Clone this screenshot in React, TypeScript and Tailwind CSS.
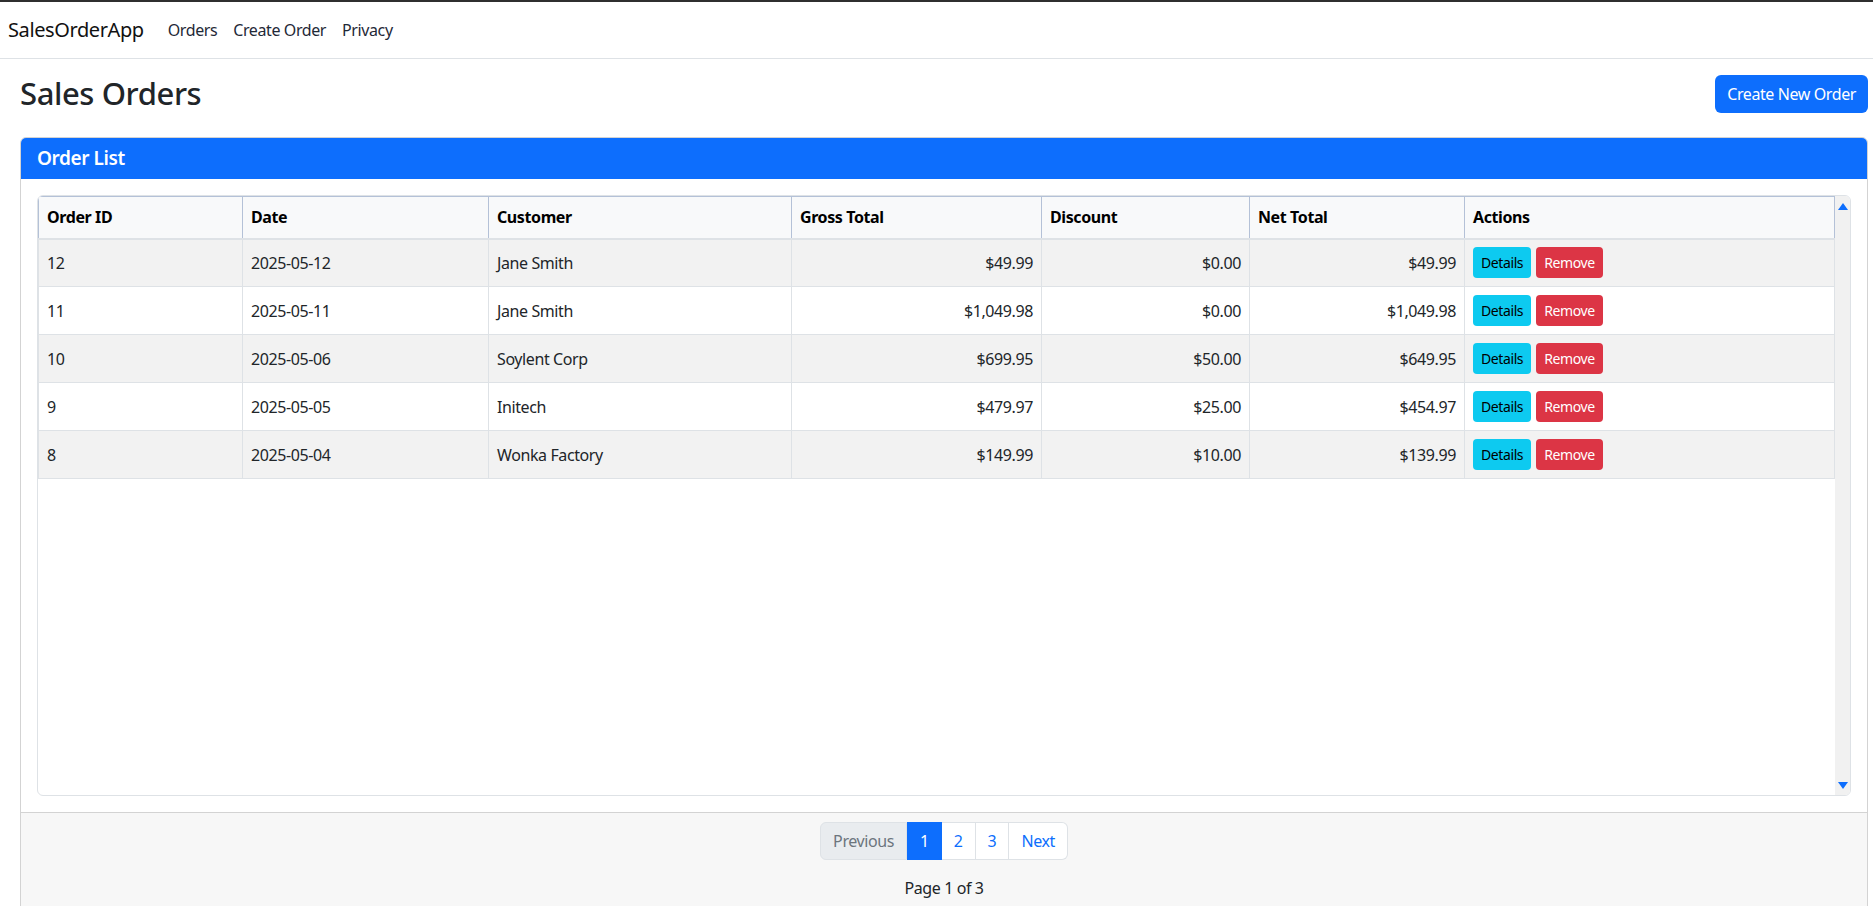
import React from "react";

type Order = {
  id: number;
  date: string;
  customer: string;
  gross: string;
  discount: string;
  net: string;
};

const orders: Order[] = [
  { id: 12, date: "2025-05-12", customer: "Jane Smith", gross: "$49.99", discount: "$0.00", net: "$49.99" },
  { id: 11, date: "2025-05-11", customer: "Jane Smith", gross: "$1,049.98", discount: "$0.00", net: "$1,049.98" },
  { id: 10, date: "2025-05-06", customer: "Soylent Corp", gross: "$699.95", discount: "$50.00", net: "$649.95" },
  { id: 9, date: "2025-05-05", customer: "Initech", gross: "$479.97", discount: "$25.00", net: "$454.97" },
  { id: 8, date: "2025-05-04", customer: "Wonka Factory", gross: "$149.99", discount: "$10.00", net: "$139.99" },
];

const th = "h-[42px] px-2 text-left font-bold text-black border-x border-t border-[#b4c1d7] border-b-2 border-b-[#dee2e6]";
const td = "h-[48px] px-2 border border-[#dee2e6]";

export default function App() {
  return (
    <div className="h-screen overflow-hidden bg-white font-['Noto_Sans',sans-serif] tracking-[-0.025em] text-[16px] text-[#212529]">
      <div className="h-[2px] bg-[#2f2f2f]" />
      {/* navbar */}
      <nav className="h-[57px] flex items-center px-2 border-b border-[#dee2e6]">
        <span className="text-[20px] text-[#111] mr-4">SalesOrderApp</span>
        <ul className="flex">
          <li className="px-2 text-[#1f2937]">Orders</li>
          <li className="px-2 text-[#1f2937]">Create Order</li>
          <li className="px-2 text-[#1f2937]">Privacy</li>
        </ul>
      </nav>

      <main className="pl-5 pr-[5px]">
        <div className="flex items-center justify-between mt-4 mb-6">
          <h2 className="text-[31px] font-medium leading-[1.2]">Sales Orders</h2>
          <button className="h-[38px] px-3 rounded-[6px] bg-[#0d6efd] text-white text-[16px]">Create New Order</button>
        </div>

        <div className="border border-[#d3d3d3] rounded-[6px] overflow-hidden">
          <div className="h-[41px] px-4 flex items-center bg-[#0d6efd] text-white">
            <h5 className="text-[19px] font-semibold">Order List</h5>
          </div>

          <div className="p-4">
            <div className="h-[601px] flex border border-[#dee2e6] rounded-[6px] overflow-hidden">
              <div className="flex-1">
                <table className="w-full border-collapse table-fixed">
                  <colgroup>
                    <col className="w-[204px]" />
                    <col className="w-[246px]" />
                    <col className="w-[303px]" />
                    <col className="w-[250px]" />
                    <col className="w-[208px]" />
                    <col className="w-[215px]" />
                    <col />
                  </colgroup>
                  <thead className="bg-[#f8f9fa]">
                    <tr>
                      <th className={th}>Order ID</th>
                      <th className={th}>Date</th>
                      <th className={th}>Customer</th>
                      <th className={th}>Gross Total</th>
                      <th className={th}>Discount</th>
                      <th className={th}>Net Total</th>
                      <th className={th}>Actions</th>
                    </tr>
                  </thead>
                  <tbody>
                    {orders.map((o, i) => (
                      <tr key={o.id} className={i % 2 === 0 ? "bg-[#f2f2f2]" : "bg-white"}>
                        <td className={td}>{o.id}</td>
                        <td className={td}>{o.date}</td>
                        <td className={td}>{o.customer}</td>
                        <td className={td + " text-right"}>{o.gross}</td>
                        <td className={td + " text-right"}>{o.discount}</td>
                        <td className={td + " text-right"}>{o.net}</td>
                        <td className={td}>
                          <div className="flex gap-[5px]">
                            <button className="h-[31px] px-2 rounded-[4px] bg-[#0dcaf0] text-black text-[14px]">Details</button>
                            <button className="h-[31px] px-2 rounded-[4px] bg-[#dc3545] text-white text-[14px]">Remove</button>
                          </div>
                        </td>
                      </tr>
                    ))}
                  </tbody>
                </table>
              </div>
              {/* scrollbar */}
              <div className="w-[15px] bg-[#f1f1f1] flex flex-col items-center justify-between pt-[7px] pb-[6px]">
                <svg width="10" height="7" viewBox="0 0 10 7">
                  <path d="M5 0 L10 7 L0 7 Z" fill="#0d6efd" />
                </svg>
                <svg width="10" height="7" viewBox="0 0 10 7">
                  <path d="M0 0 L10 0 L5 7 Z" fill="#0d6efd" />
                </svg>
              </div>
            </div>
          </div>

          <div className="border-t border-[#d3d3d3] bg-[#f7f7f7] px-4 pt-[9px] pb-4">
            <ul className="flex justify-center mb-4">
              <li className="h-[38px] px-3 flex items-center border border-[#dee2e6] rounded-l-[6px] bg-[#e9ecef] text-[#6c757d]">Previous</li>
              <li className="h-[38px] px-3 flex items-center border border-[#0d6efd] bg-[#0d6efd] text-white">1</li>
              <li className="h-[38px] px-3 flex items-center border border-l-0 border-[#dee2e6] bg-white text-[#0d6efd]">2</li>
              <li className="h-[38px] px-3 flex items-center border border-l-0 border-[#dee2e6] bg-white text-[#0d6efd]">3</li>
              <li className="h-[38px] px-3 flex items-center border border-l-0 border-[#dee2e6] rounded-r-[6px] bg-white text-[#0d6efd]">Next</li>
            </ul>
            <p className="text-center">Page 1 of 3</p>
          </div>
        </div>
      </main>
    </div>
  );
}
